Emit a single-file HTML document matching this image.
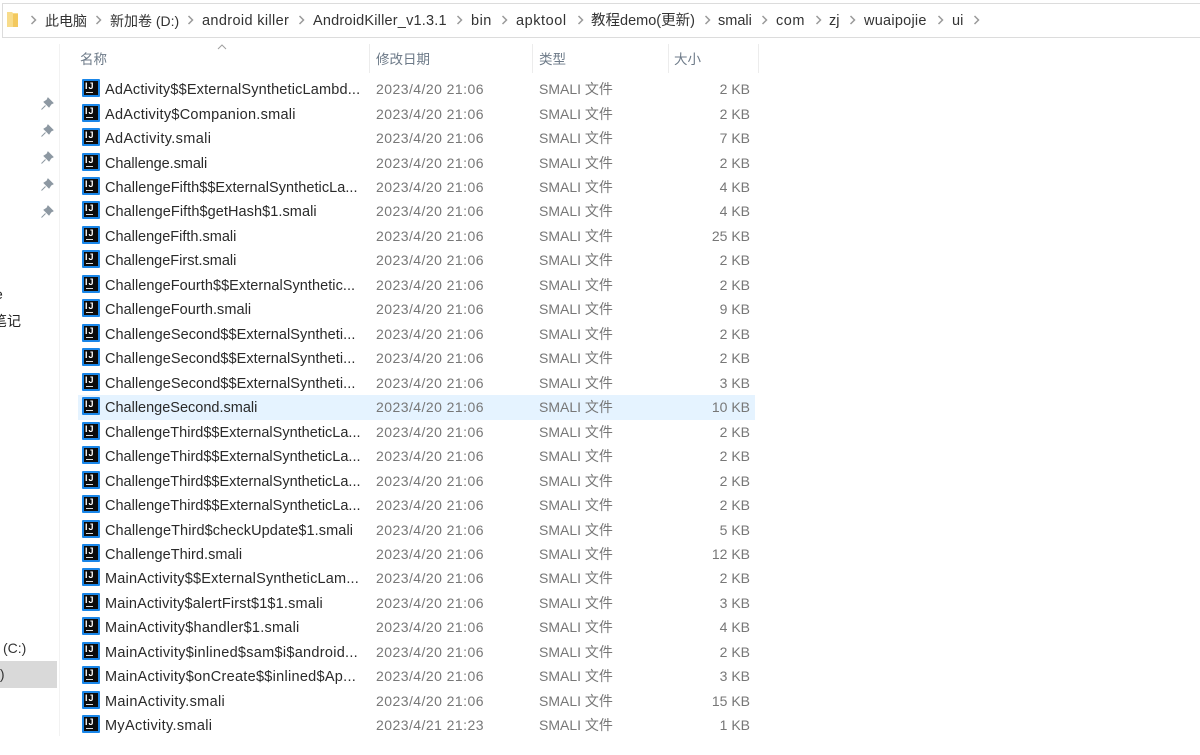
<!DOCTYPE html>
<html lang="zh"><head><meta charset="utf-8"><title>ui</title>
<style>
html,body{margin:0;padding:0;background:#fff}
body{width:1200px;height:755px;position:relative;overflow:hidden;font-family:"Liberation Sans","Noto Sans CJK SC",sans-serif;font-size:14px;color:#222}
.a{position:absolute;white-space:nowrap}
.bar{left:2px;top:3px;width:1198px;height:33px;border:1px solid #dcdcdc;border-right:0;box-sizing:content-box}
.c{position:absolute;top:15px}
.bc{position:absolute;top:12px;line-height:18px;font-size:14.5px;color:#333;white-space:nowrap}
.h{position:absolute;top:51px;line-height:18px;font-size:13.5px;color:#6d7a88}
.sep{position:absolute;top:44px;width:1px;height:29px;background:#ececec}
#list{position:absolute;left:78px;top:77.1px;width:677px}
.r{position:relative;height:24.48px;line-height:24.48px;white-space:nowrap}
.r span{position:absolute;top:0}
.r span.n{left:27px;top:1px;font-size:14.5px;color:#2a2a2a}
.d{left:298px;font-size:14px;color:#777;letter-spacing:.45px}
.t{left:461px;font-size:14px;color:#777}
.s{right:5px;font-size:14px;color:#777}
.sel{background:#e5f3ff}
.ic{position:absolute;left:4px;top:2px;width:14px;height:14px;border:2px solid #1a86e8;background:#0b0b0b;display:block;overflow:hidden;border-radius:1px}
.ic b{position:absolute;left:1px;top:1px;font:bold 9px/9px "Liberation Sans",sans-serif;color:#fff;letter-spacing:1px}
.ic u{position:absolute;left:2px;top:11px;width:7px;height:1px;background:#ddd}
.pin{position:absolute;left:40px}
</style></head><body>

<div class="a bar"></div>
<svg class="a" style="left:7px;top:12px" width="11" height="16" viewBox="0 0 11 16"><path d="M0 0H5L6 1H11V15H0Z" fill="#f8dc8b"/><path d="M6 2H11V15H6Z" fill="#f3c95f"/></svg>

<svg class="c" style="left:30px" width="7" height="10" viewBox="0 0 7 10"><path d="M1.5 1L5.5 5L1.5 9" fill="none" stroke="#9a9a9a" stroke-width="1.5"/></svg>
<svg class="c" style="left:95px" width="7" height="10" viewBox="0 0 7 10"><path d="M1.5 1L5.5 5L1.5 9" fill="none" stroke="#9a9a9a" stroke-width="1.5"/></svg>
<svg class="c" style="left:187px" width="7" height="10" viewBox="0 0 7 10"><path d="M1.5 1L5.5 5L1.5 9" fill="none" stroke="#9a9a9a" stroke-width="1.5"/></svg>
<svg class="c" style="left:298px" width="7" height="10" viewBox="0 0 7 10"><path d="M1.5 1L5.5 5L1.5 9" fill="none" stroke="#9a9a9a" stroke-width="1.5"/></svg>
<svg class="c" style="left:456px" width="7" height="10" viewBox="0 0 7 10"><path d="M1.5 1L5.5 5L1.5 9" fill="none" stroke="#9a9a9a" stroke-width="1.5"/></svg>
<svg class="c" style="left:501px" width="7" height="10" viewBox="0 0 7 10"><path d="M1.5 1L5.5 5L1.5 9" fill="none" stroke="#9a9a9a" stroke-width="1.5"/></svg>
<svg class="c" style="left:577px" width="7" height="10" viewBox="0 0 7 10"><path d="M1.5 1L5.5 5L1.5 9" fill="none" stroke="#9a9a9a" stroke-width="1.5"/></svg>
<svg class="c" style="left:704px" width="7" height="10" viewBox="0 0 7 10"><path d="M1.5 1L5.5 5L1.5 9" fill="none" stroke="#9a9a9a" stroke-width="1.5"/></svg>
<svg class="c" style="left:761px" width="7" height="10" viewBox="0 0 7 10"><path d="M1.5 1L5.5 5L1.5 9" fill="none" stroke="#9a9a9a" stroke-width="1.5"/></svg>
<svg class="c" style="left:815px" width="7" height="10" viewBox="0 0 7 10"><path d="M1.5 1L5.5 5L1.5 9" fill="none" stroke="#9a9a9a" stroke-width="1.5"/></svg>
<svg class="c" style="left:849px" width="7" height="10" viewBox="0 0 7 10"><path d="M1.5 1L5.5 5L1.5 9" fill="none" stroke="#9a9a9a" stroke-width="1.5"/></svg>
<svg class="c" style="left:937px" width="7" height="10" viewBox="0 0 7 10"><path d="M1.5 1L5.5 5L1.5 9" fill="none" stroke="#9a9a9a" stroke-width="1.5"/></svg>
<svg class="c" style="left:973px" width="7" height="10" viewBox="0 0 7 10"><path d="M1.5 1L5.5 5L1.5 9" fill="none" stroke="#9a9a9a" stroke-width="1.5"/></svg>

<div class="bc" style="left:45px;font-size:14px">此电脑</div>
<div class="bc" style="left:110px;font-size:14px">新加卷 (D:)</div>
<div class="bc" style="left:202px;letter-spacing:.36px">android killer</div>
<div class="bc" style="left:313px;letter-spacing:.2px">AndroidKiller_v1.3.1</div>
<div class="bc" style="left:471px;letter-spacing:.5px">bin</div>
<div class="bc" style="left:516px;letter-spacing:.55px">apktool</div>
<div class="bc" style="left:591px">教程demo(更新)</div>
<div class="bc" style="left:718px">smali</div>
<div class="bc" style="left:776px;letter-spacing:.5px">com</div>
<div class="bc" style="left:829px">zj</div>
<div class="bc" style="left:864px;letter-spacing:.25px">wuaipojie</div>
<div class="bc" style="left:952px">ui</div>

<div class="a" style="left:59px;top:44px;width:1px;height:692px;background:#f2f2f2"></div>

<svg class="a" style="left:217px;top:44px" width="10" height="6" viewBox="0 0 10 6"><path d="M1 5L5 1L9 5" fill="none" stroke="#a0a0a0" stroke-width="1"/></svg>
<div class="h" style="left:80px">名称</div>
<div class="sep" style="left:369px"></div>
<div class="h" style="left:376px">修改日期</div>
<div class="sep" style="left:532px"></div>
<div class="h" style="left:539px">类型</div>
<div class="sep" style="left:668px"></div>
<div class="h" style="left:674px">大小</div>
<div class="sep" style="left:758px"></div>

<svg class="pin" style="top:97px" width="14" height="14" viewBox="0 0 14 14"><path d="M8 1L13 6L11 7L9 10L4 5L7 3ZM5.5 8.5L1.5 12.5" fill="#8d98a2" stroke="#8d98a2" stroke-width="1"/></svg>
<svg class="pin" style="top:124px" width="14" height="14" viewBox="0 0 14 14"><path d="M8 1L13 6L11 7L9 10L4 5L7 3ZM5.5 8.5L1.5 12.5" fill="#8d98a2" stroke="#8d98a2" stroke-width="1"/></svg>
<svg class="pin" style="top:151px" width="14" height="14" viewBox="0 0 14 14"><path d="M8 1L13 6L11 7L9 10L4 5L7 3ZM5.5 8.5L1.5 12.5" fill="#8d98a2" stroke="#8d98a2" stroke-width="1"/></svg>
<svg class="pin" style="top:178px" width="14" height="14" viewBox="0 0 14 14"><path d="M8 1L13 6L11 7L9 10L4 5L7 3ZM5.5 8.5L1.5 12.5" fill="#8d98a2" stroke="#8d98a2" stroke-width="1"/></svg>
<svg class="pin" style="top:205px" width="14" height="14" viewBox="0 0 14 14"><path d="M8 1L13 6L11 7L9 10L4 5L7 3ZM5.5 8.5L1.5 12.5" fill="#8d98a2" stroke="#8d98a2" stroke-width="1"/></svg>

<div class="a" style="left:-5px;top:285px;font-size:14px;line-height:18px">e</div>
<div class="a" style="left:-7px;top:312px;font-size:14px;line-height:18px">笔记</div>
<div class="a" style="left:3px;top:639px;font-size:14px;line-height:18px;color:#333">(C:)</div>
<div class="a" style="left:0;top:661px;width:57px;height:27px;background:#d9d9d9"></div>
<div class="a" style="left:-4px;top:665px;font-size:14px;line-height:18px;color:#333">:)</div>

<div id="list">
<div class="r"><i class="ic"><b>IJ</b><u></u></i><span class="n" style="letter-spacing:.17px">AdActivity$$ExternalSyntheticLambd...</span><span class="d">2023/4/20 21:06</span><span class="t">SMALI 文件</span><span class="s">2 KB</span></div>
<div class="r"><i class="ic"><b>IJ</b><u></u></i><span class="n" style="letter-spacing:.27px">AdActivity$Companion.smali</span><span class="d">2023/4/20 21:06</span><span class="t">SMALI 文件</span><span class="s">2 KB</span></div>
<div class="r"><i class="ic"><b>IJ</b><u></u></i><span class="n" style="letter-spacing:.37px">AdActivity.smali</span><span class="d">2023/4/20 21:06</span><span class="t">SMALI 文件</span><span class="s">7 KB</span></div>
<div class="r"><i class="ic"><b>IJ</b><u></u></i><span class="n" style="letter-spacing:-.07px">Challenge.smali</span><span class="d">2023/4/20 21:06</span><span class="t">SMALI 文件</span><span class="s">2 KB</span></div>
<div class="r"><i class="ic"><b>IJ</b><u></u></i><span class="n" style="letter-spacing:.05px">ChallengeFifth$$ExternalSyntheticLa...</span><span class="d">2023/4/20 21:06</span><span class="t">SMALI 文件</span><span class="s">4 KB</span></div>
<div class="r"><i class="ic"><b>IJ</b><u></u></i><span class="n" style="letter-spacing:.07px">ChallengeFifth$getHash$1.smali</span><span class="d">2023/4/20 21:06</span><span class="t">SMALI 文件</span><span class="s">4 KB</span></div>
<div class="r"><i class="ic"><b>IJ</b><u></u></i><span class="n">ChallengeFifth.smali</span><span class="d">2023/4/20 21:06</span><span class="t">SMALI 文件</span><span class="s">25 KB</span></div>
<div class="r"><i class="ic"><b>IJ</b><u></u></i><span class="n">ChallengeFirst.smali</span><span class="d">2023/4/20 21:06</span><span class="t">SMALI 文件</span><span class="s">2 KB</span></div>
<div class="r"><i class="ic"><b>IJ</b><u></u></i><span class="n" style="letter-spacing:.05px">ChallengeFourth$$ExternalSynthetic...</span><span class="d">2023/4/20 21:06</span><span class="t">SMALI 文件</span><span class="s">2 KB</span></div>
<div class="r"><i class="ic"><b>IJ</b><u></u></i><span class="n" style="letter-spacing:.05px">ChallengeFourth.smali</span><span class="d">2023/4/20 21:06</span><span class="t">SMALI 文件</span><span class="s">9 KB</span></div>
<div class="r"><i class="ic"><b>IJ</b><u></u></i><span class="n" style="letter-spacing:.06px">ChallengeSecond$$ExternalSyntheti...</span><span class="d">2023/4/20 21:06</span><span class="t">SMALI 文件</span><span class="s">2 KB</span></div>
<div class="r"><i class="ic"><b>IJ</b><u></u></i><span class="n" style="letter-spacing:.06px">ChallengeSecond$$ExternalSyntheti...</span><span class="d">2023/4/20 21:06</span><span class="t">SMALI 文件</span><span class="s">2 KB</span></div>
<div class="r"><i class="ic"><b>IJ</b><u></u></i><span class="n" style="letter-spacing:.06px">ChallengeSecond$$ExternalSyntheti...</span><span class="d">2023/4/20 21:06</span><span class="t">SMALI 文件</span><span class="s">3 KB</span></div>
<div class="r sel"><i class="ic"><b>IJ</b><u></u></i><span class="n">ChallengeSecond.smali</span><span class="d">2023/4/20 21:06</span><span class="t">SMALI 文件</span><span class="s">10 KB</span></div>
<div class="r"><i class="ic"><b>IJ</b><u></u></i><span class="n">ChallengeThird$$ExternalSyntheticLa...</span><span class="d">2023/4/20 21:06</span><span class="t">SMALI 文件</span><span class="s">2 KB</span></div>
<div class="r"><i class="ic"><b>IJ</b><u></u></i><span class="n">ChallengeThird$$ExternalSyntheticLa...</span><span class="d">2023/4/20 21:06</span><span class="t">SMALI 文件</span><span class="s">2 KB</span></div>
<div class="r"><i class="ic"><b>IJ</b><u></u></i><span class="n">ChallengeThird$$ExternalSyntheticLa...</span><span class="d">2023/4/20 21:06</span><span class="t">SMALI 文件</span><span class="s">2 KB</span></div>
<div class="r"><i class="ic"><b>IJ</b><u></u></i><span class="n">ChallengeThird$$ExternalSyntheticLa...</span><span class="d">2023/4/20 21:06</span><span class="t">SMALI 文件</span><span class="s">2 KB</span></div>
<div class="r"><i class="ic"><b>IJ</b><u></u></i><span class="n" style="letter-spacing:.09px">ChallengeThird$checkUpdate$1.smali</span><span class="d">2023/4/20 21:06</span><span class="t">SMALI 文件</span><span class="s">5 KB</span></div>
<div class="r"><i class="ic"><b>IJ</b><u></u></i><span class="n" style="letter-spacing:.05px">ChallengeThird.smali</span><span class="d">2023/4/20 21:06</span><span class="t">SMALI 文件</span><span class="s">12 KB</span></div>
<div class="r"><i class="ic"><b>IJ</b><u></u></i><span class="n" style="letter-spacing:.2px">MainActivity$$ExternalSyntheticLam...</span><span class="d">2023/4/20 21:06</span><span class="t">SMALI 文件</span><span class="s">2 KB</span></div>
<div class="r"><i class="ic"><b>IJ</b><u></u></i><span class="n" style="letter-spacing:.18px">MainActivity$alertFirst$1$1.smali</span><span class="d">2023/4/20 21:06</span><span class="t">SMALI 文件</span><span class="s">3 KB</span></div>
<div class="r"><i class="ic"><b>IJ</b><u></u></i><span class="n" style="letter-spacing:.24px">MainActivity$handler$1.smali</span><span class="d">2023/4/20 21:06</span><span class="t">SMALI 文件</span><span class="s">4 KB</span></div>
<div class="r"><i class="ic"><b>IJ</b><u></u></i><span class="n" style="letter-spacing:.28px">MainActivity$inlined$sam$i$android...</span><span class="d">2023/4/20 21:06</span><span class="t">SMALI 文件</span><span class="s">2 KB</span></div>
<div class="r"><i class="ic"><b>IJ</b><u></u></i><span class="n" style="letter-spacing:.28px">MainActivity$onCreate$$inlined$Ap...</span><span class="d">2023/4/20 21:06</span><span class="t">SMALI 文件</span><span class="s">3 KB</span></div>
<div class="r"><i class="ic"><b>IJ</b><u></u></i><span class="n" style="letter-spacing:.33px">MainActivity.smali</span><span class="d">2023/4/20 21:06</span><span class="t">SMALI 文件</span><span class="s">15 KB</span></div>
<div class="r"><i class="ic"><b>IJ</b><u></u></i><span class="n" style="letter-spacing:.33px">MyActivity.smali</span><span class="d">2023/4/21 21:23</span><span class="t">SMALI 文件</span><span class="s">1 KB</span></div>
</div>
</body></html>
